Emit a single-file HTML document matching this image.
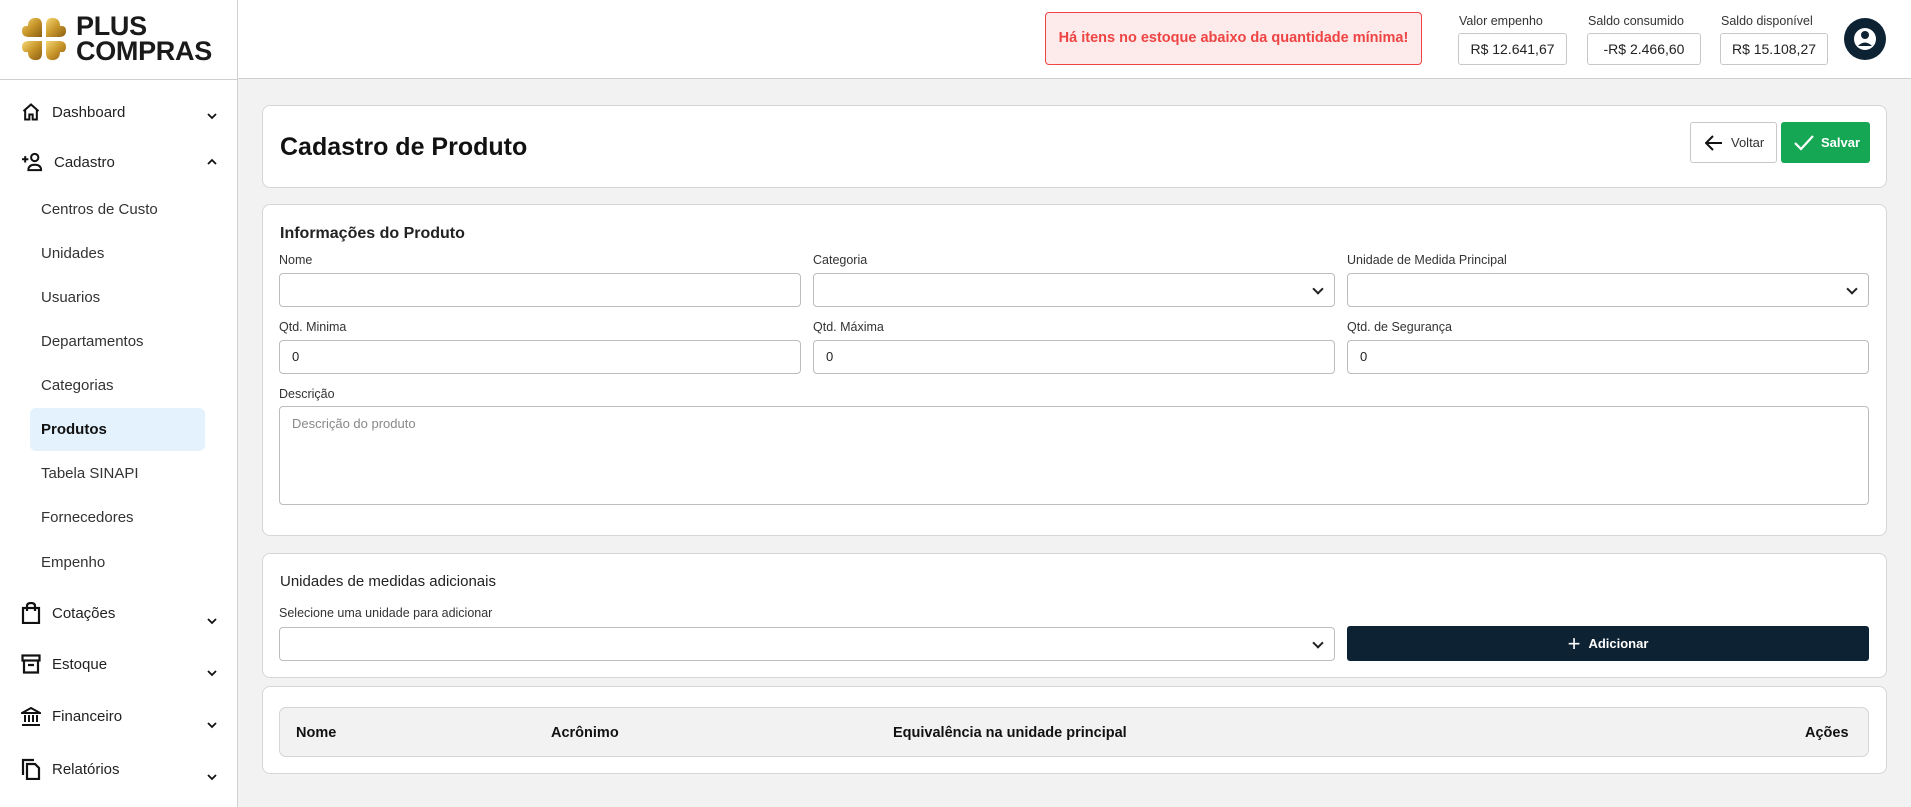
<!DOCTYPE html>
<html><head><meta charset="utf-8"><style>
*{box-sizing:border-box;margin:0;padding:0}
body{width:1911px;height:807px;overflow:hidden;background:#f2f2f2;font-family:"Liberation Sans",Arial,sans-serif;color:#222;position:relative}
.abs{position:absolute}
#hdr{left:0;top:0;width:1911px;height:79px;background:#fff;border-bottom:1px solid #d0d0d0}
#side{left:0;top:0;width:238px;height:807px;background:#fff;border-right:1px solid #d0d0d0}
.logo{left:76px;top:14px;font-weight:900;font-size:27px;line-height:25px;color:#1a1a1a;letter-spacing:-0.3px}
.nav{position:absolute;left:21px;font-size:15px;color:#222;display:flex;align-items:center}
.nav svg{margin-right:11px}
.chev{position:absolute;left:206px;width:12px;height:12px}
.sub{position:absolute;left:41px;font-size:15px;color:#333}
.card{position:absolute;left:262px;width:1625px;background:#fff;border:1px solid #d6d6d6;border-radius:8px}
.lbl{position:absolute;font-size:12.5px;color:#333}
.inp{position:absolute;height:34px;border:1px solid #bdbdbd;border-radius:4px;background:#fff;font-size:13px;padding:0 12px;line-height:32px;color:#222}
.sel::after{content:"";position:absolute;right:12px;top:11px;width:6px;height:6px;border-right:2px solid #222;border-bottom:2px solid #222;transform:rotate(45deg)}
.vbox{position:absolute;top:33px;height:32px;border:1px solid #c8c8c8;border-radius:3px;font-size:14px;text-align:center;line-height:30px;color:#222}
.vl{position:absolute;top:14px;font-size:12.5px;color:#333}
</style></head><body>
<div id="hdr" class="abs"></div>
<div id="side" class="abs">
 <div style="position:absolute;left:0;top:79px;width:238px;height:1px;background:#d0d0d0"></div>
</div>
<svg class="abs" style="left:21px;top:16px" width="46" height="46" viewBox="0 0 46 46">
<defs><linearGradient id="g" x1="0" y1="0" x2="1" y2="1"><stop offset="0" stop-color="#f3d774"/><stop offset=".5" stop-color="#c8962a"/><stop offset="1" stop-color="#8a5e12"/></linearGradient></defs>
<g fill="url(#g)">
<path d="M21 21H8Q1 21 1 15Q1 9 7 10Q7 3 13 2Q21 1 21 9z"/>
<path d="M25 21h13q7 0 7-6q0-6-6-5q0-7-6-8q-8-1-8 7z"/>
<path d="M21 25H8q-7 0-7 6q0 6 6 5q0 7 6 8q8 1 8-7z"/>
<path d="M25 25h13q7 0 7 6q0 6-6 5q0 7-6 8q-8 1-8-7z"/>
</g>
</svg>
<div class="abs logo">PLUS<br>COMPRAS</div>

<div class="nav" style="top:102px"><svg width="20" height="20" viewBox="0 0 24 24" fill="none" stroke="#111" stroke-width="2.4"><path d="M3 11L12 3l9 8M5 9v12h5v-6h4v6h5V9"/></svg>Dashboard</div>
<svg class="chev" style="top:110px" viewBox="0 0 12 12"><path d="M2 4l4 4 4-4" fill="none" stroke="#111" stroke-width="1.8"/></svg>
<div class="nav" style="top:152px"><svg width="22" height="20" viewBox="0 0 24 22" fill="none" stroke="#111" stroke-width="2.2"><path d="M1 8h7M4.5 4.5v7"/><circle cx="15" cy="6" r="4"/><path d="M8 20q0-6 7-6t7 6z"/></svg>Cadastro</div>
<svg class="chev" style="top:156px" viewBox="0 0 12 12"><path d="M2 8l4-4 4 4" fill="none" stroke="#111" stroke-width="1.8"/></svg>
<div class="sub" style="top:201px">Centros de Custo</div>
<div class="sub" style="top:245px">Unidades</div>
<div class="sub" style="top:289px">Usuarios</div>
<div class="sub" style="top:333px">Departamentos</div>
<div class="sub" style="top:377px">Categorias</div>
<div class="abs" style="left:30px;top:408px;width:175px;height:43px;background:#e3f2fd;border-radius:6px"></div>
<div class="sub" style="top:421px;font-weight:bold;color:#111">Produtos</div>
<div class="sub" style="top:465px">Tabela SINAPI</div>
<div class="sub" style="top:509px">Fornecedores</div>
<div class="sub" style="top:554px">Empenho</div>
<div class="nav" style="top:602px"><svg width="20" height="22" viewBox="0 0 20 22" fill="none" stroke="#111" stroke-width="2.2"><rect x="2" y="6" width="16" height="15"/><path d="M6 9V4q0-3 4-3t4 3v5"/></svg>Cotações</div>
<svg class="chev" style="top:615px" viewBox="0 0 12 12"><path d="M2 4l4 4 4-4" fill="none" stroke="#111" stroke-width="1.8"/></svg>
<div class="nav" style="top:654px"><svg width="20" height="20" viewBox="0 0 20 20" fill="none" stroke="#111" stroke-width="2.2"><rect x="1.5" y="1.5" width="17" height="5"/><path d="M3 6.5v12h14v-12M7 11h6"/></svg>Estoque</div>
<svg class="chev" style="top:667px" viewBox="0 0 12 12"><path d="M2 4l4 4 4-4" fill="none" stroke="#111" stroke-width="1.8"/></svg>
<div class="nav" style="top:706px"><svg width="20" height="20" viewBox="0 0 20 20" fill="none" stroke="#111" stroke-width="2"><path d="M1 7L10 2l9 5zM4 9v7M8 9v7M12 9v7M16 9v7M1 19h18"/></svg>Financeiro</div>
<svg class="chev" style="top:719px" viewBox="0 0 12 12"><path d="M2 4l4 4 4-4" fill="none" stroke="#111" stroke-width="1.8"/></svg>
<div class="nav" style="top:758px"><svg width="20" height="22" viewBox="0 0 20 22" fill="none" stroke="#111" stroke-width="2.2"><path d="M2 17V2h11"/><path d="M6 6h8l4 4v11H6z"/></svg>Relatórios</div>
<svg class="chev" style="top:771px" viewBox="0 0 12 12"><path d="M2 4l4 4 4-4" fill="none" stroke="#111" stroke-width="1.8"/></svg>

<div class="abs" style="left:1045px;top:12px;width:377px;height:53px;background:#fdeaea;border:1px solid #ef4444;border-radius:4px;color:#ef4444;font-weight:bold;font-size:14.5px;text-align:center;line-height:51px">Há itens no estoque abaixo da quantidade mínima!</div>
<div class="vl" style="left:1459px">Valor empenho</div>
<div class="vl" style="left:1588px">Saldo consumido</div>
<div class="vl" style="left:1721px">Saldo disponível</div>
<div class="vbox" style="left:1458px;width:109px">R$ 12.641,67</div>
<div class="vbox" style="left:1587px;width:114px">-R$ 2.466,60</div>
<div class="vbox" style="left:1720px;width:108px">R$ 15.108,27</div>
<svg class="abs" style="left:1844px;top:18px" width="42" height="42" viewBox="0 0 42 42"><circle cx="21" cy="21" r="21" fill="#0d2233"/><circle cx="21" cy="21" r="11" fill="#fff"/><circle cx="21" cy="17" r="4" fill="#0d2233"/><path d="M14 28q7-7 14 0" fill="#0d2233"/></svg>

<div class="card" style="top:105px;height:83px">
 <div class="abs" style="left:17px;top:27px;font-size:25px;font-weight:bold;color:#111">Cadastro de Produto</div>
 <div class="abs" style="left:1427px;top:16px;width:87px;height:41px;border:1px solid #c8c8c8;border-radius:3px;font-size:13px;line-height:39px;padding-left:40px;color:#333"><svg class="abs" style="left:14px;top:12px" width="18" height="16" viewBox="0 0 18 16"><path d="M17 8H2M8 1L1 8l7 7" fill="none" stroke="#111" stroke-width="2"/></svg>Voltar</div>
 <div class="abs" style="left:1518px;top:16px;width:89px;height:41px;background:#16a755;border-radius:3px;font-size:13px;font-weight:bold;line-height:41px;padding-left:40px;color:#fff"><svg class="abs" style="left:13px;top:13px" width="20" height="16" viewBox="0 0 20 16"><path d="M1 8l6 6L19 1" fill="none" stroke="#fff" stroke-width="2.2"/></svg>Salvar</div>
</div>

<div class="card" style="top:204px;height:332px">
 <div class="abs" style="left:17px;top:20px;font-size:16px;font-weight:bold;color:#222">Informações do Produto</div>
</div>
<div class="lbl" style="left:279px;top:253px">Nome</div>
<div class="lbl" style="left:813px;top:253px">Categoria</div>
<div class="lbl" style="left:1347px;top:253px">Unidade de Medida Principal</div>
<div class="inp" style="left:279px;top:273px;width:522px"></div>
<div class="inp sel" style="left:813px;top:273px;width:522px"></div>
<div class="inp sel" style="left:1347px;top:273px;width:522px"></div>
<div class="lbl" style="left:279px;top:320px">Qtd. Minima</div>
<div class="lbl" style="left:813px;top:320px">Qtd. Máxima</div>
<div class="lbl" style="left:1347px;top:320px">Qtd. de Segurança</div>
<div class="inp" style="left:279px;top:340px;width:522px">0</div>
<div class="inp" style="left:813px;top:340px;width:522px">0</div>
<div class="inp" style="left:1347px;top:340px;width:522px">0</div>
<div class="lbl" style="left:279px;top:387px">Descrição</div>
<div class="inp" style="left:279px;top:406px;width:1590px;height:99px;line-height:34px;color:#888">Descrição do produto</div>

<div class="card" style="top:553px;height:125px">
 <div class="abs" style="left:17px;top:19px;font-size:15px;color:#222">Unidades de medidas adicionais</div>
</div>
<div class="lbl" style="left:279px;top:606px">Selecione uma unidade para adicionar</div>
<div class="inp sel" style="left:279px;top:627px;width:1056px"></div>
<div class="abs" style="left:1347px;top:626px;width:522px;height:35px;background:#0d2233;border-radius:3px;color:#fff;font-size:13px;font-weight:bold;text-align:center;line-height:35px"><span style="font-size:22px;font-weight:normal;vertical-align:-3px;margin-right:8px">+</span>Adicionar</div>

<div class="card" style="top:686px;height:88px"></div>
<div class="abs" style="left:279px;top:707px;width:1590px;height:50px;background:#f2f2f2;border:1px solid #d6d6d6;border-radius:7px;font-weight:bold;font-size:14.5px;color:#111">
 <span class="abs" style="left:16px;top:17px">Nome</span>
 <span class="abs" style="left:271px;top:17px">Acrônimo</span>
 <span class="abs" style="left:613px;top:17px">Equivalência na unidade principal</span>
 <span class="abs" style="left:1525px;top:17px">Ações</span>
</div>
</body></html>
